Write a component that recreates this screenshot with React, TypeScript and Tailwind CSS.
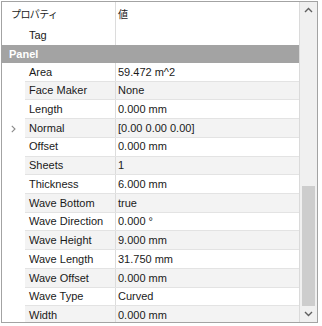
import React from 'react';

// Rows of the "Panel" group, in display order
const rows: { name: string; value: string; expandable?: boolean }[] = [
  { name: 'Area', value: '59.472 m^2' },
  { name: 'Face Maker', value: 'None' },
  { name: 'Length', value: '0.000 mm' },
  { name: 'Normal', value: '[0.00 0.00 0.00]', expandable: true },
  { name: 'Offset', value: '0.000 mm' },
  { name: 'Sheets', value: '1' },
  { name: 'Thickness', value: '6.000 mm' },
  { name: 'Wave Bottom', value: 'true' },
  { name: 'Wave Direction', value: '0.000 °' },
  { name: 'Wave Height', value: '9.000 mm' },
  { name: 'Wave Length', value: '31.750 mm' },
  { name: 'Wave Offset', value: '0.000 mm' },
  { name: 'Wave Type', value: 'Curved' },
  { name: 'Width', value: '0.000 mm' },
];

const Chevron: React.FC<{ up?: boolean }> = ({ up }) => (
  <svg width="9" height="6" viewBox="0 0 9 6" className="block">
    <path
      d={up ? 'M1 5 L4.5 1.5 L8 5' : 'M1 1 L4.5 4.5 L8 1'}
      fill="none"
      stroke="#606060"
      strokeWidth="1.4"
    />
  </svg>
);

export default function App() {
  return (
    <div className="w-[322px] h-[326px] bg-white overflow-hidden pt-[1px] pl-[1px] font-['Liberation_Sans','Noto_Sans_CJK_JP',sans-serif] text-[11px] text-[#1a1a1a]">
      <div className="w-[317px] h-[322px] border border-[#a3a3a3] flex overflow-hidden">
        {/* grid */}
        <div className="w-[298px] border-r border-[#dadada] flex flex-col overflow-hidden">
          <div className="h-[24px] flex shrink-0">
            <div className="w-[114px] border-r border-[#dcdcdc] pl-[9px] flex items-center text-[10px] tracking-[-0.6px]">
              プロパティ
            </div>
            <div className="flex-1 pl-[2px] flex items-center text-[10px]">値</div>
          </div>
          <div className="h-[19px] flex shrink-0">
            <div className="w-[23px]" />
            <div className="w-[91px] border-r border-[#dcdcdc] pl-[4px] flex items-center">Tag</div>
            <div className="flex-1" />
          </div>
          <div className="h-[18px] shrink-0 bg-[#a3a3a3] text-white font-bold pl-[7px] flex items-center">Panel</div>
          {rows.map((row, i) => (
            <div key={row.name} className="h-[18.72px] flex shrink-0">
              <div className="w-[23px] flex items-center pl-[9px]">
                {row.expandable && (
                  <svg width="5" height="8" viewBox="0 0 5 8">
                    <path d="M0.8 0.8 L4 4 L0.8 7.2" fill="none" stroke="#8a8a8a" strokeWidth="1.1" />
                  </svg>
                )}
              </div>
              <div
                className={`flex-1 flex border-b border-[#e3e3e3] ${i % 2 === 1 ? 'bg-[#f3f3f3]' : 'bg-white'}`}
              >
                <div className="w-[91px] border-r border-[#dcdcdc] pl-[4px] flex items-center whitespace-nowrap">
                  {row.name}
                </div>
                <div className="flex-1 pl-[2px] flex items-center whitespace-nowrap">{row.value}</div>
              </div>
            </div>
          ))}
        </div>
        {/* scrollbar */}
        <div className="flex-1 bg-[#f0f0f0] flex flex-col items-center">
          <div className="h-[17px] flex items-center justify-center">
            <Chevron up />
          </div>
          <div className="flex-1 w-full flex flex-col px-[2px]">
            <div className="h-[167px]" />
            <div className="h-[120px] bg-[#cdcdcd]" />
          </div>
          <div className="h-[17px] flex items-center justify-center">
            <Chevron />
          </div>
        </div>
      </div>
    </div>
  );
}
